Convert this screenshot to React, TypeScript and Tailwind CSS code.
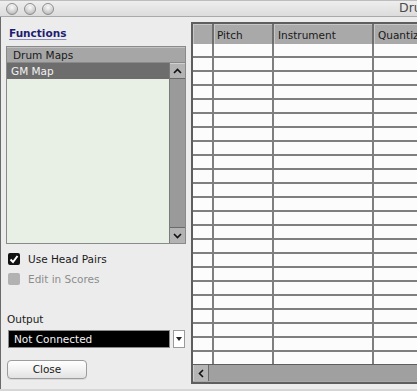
import React from "react";

const font = { fontFamily: '"DejaVu Sans", "Noto Sans", sans-serif' };

function Light() {
  return (
    <div className="w-[12px] h-[12px] rounded-full border border-[#8e8e8e] bg-[radial-gradient(circle_at_50%_35%,#fafafa,#d0d0d0_55%,#a9a9a9)] shadow-[inset_0_1px_1px_rgba(255,255,255,0.8)]" />
  );
}

const ROWS = Array.from({ length: 23 }, (_, i) => i);

export default function App() {
  return (
    <div
      className="w-[417px] h-[391px] overflow-hidden bg-[#d6d6d6] flex flex-col text-[#1a1a1a]"
      style={font}
    >
      {/* title bar */}
      <div className="h-[17px] shrink-0 flex items-center overflow-hidden bg-[linear-gradient(#eeeeee,#dcdcdc)] border-b border-[#a9a9a9] border-t border-t-[#bdbdbd] pl-[6px]">
        <div className="flex gap-[6px] shrink-0">
          <Light />
          <Light />
          <Light />
        </div>
        <span className="ml-[345px] shrink-0 whitespace-nowrap text-[12.5px] leading-none text-[#4a4a4a]">
          Drum Map
        </span>
      </div>

      {/* body */}
      <div className="flex-1 flex bg-[#ececec] border-l border-[#6a6a6a] mb-[2px]">
        {/* left column */}
        <div className="w-[186px] shrink-0 pl-[5px] flex flex-col">
          <div className="mt-[9px] h-[14px] ml-[3px] text-[10.5px] font-bold leading-[14px] text-[#1c1c72] underline decoration-[#8c8cb8] underline-offset-[2px]">
            Functions
          </div>
          {/* list */}
          <div className="mt-[6px] w-[180px] h-[198px] border border-[#8a8a8a] flex flex-col">
            <div className="h-[16px] shrink-0 bg-[#a6a6a6] border-b border-[#8a8a8a] border-t border-t-[#c2c2c2] pl-[6px] text-[10.5px] leading-[14px] text-[#1a1a1a]">
              Drum Maps
            </div>
            <div className="flex-1 flex">
              <div className="flex-1 flex flex-col bg-[#e8efe4]">
                <div className="h-[16px] bg-[#6d6d6d] pl-[4px] text-[10.5px] leading-[16px] text-[#f2f2f2]">
                  GM Map
                </div>
              </div>
              <div className="w-[16px] flex flex-col bg-[#9a9a9a] border-l border-[#7a7a7a]">
                <div className="h-[16px] bg-[#b3b3b3] border-b border-[#6a6a6a] border-t border-t-[#d0d0d0] flex items-center justify-center">
                  <svg width="9" height="6" viewBox="0 0 9 6">
                    <path d="M1 5 L4.5 1.5 L8 5" fill="none" stroke="#111" strokeWidth="1.6" />
                  </svg>
                </div>
                <div className="flex-1" />
                <div className="h-[16px] bg-[#b3b3b3] border-t border-[#6a6a6a] flex items-center justify-center">
                  <svg width="9" height="6" viewBox="0 0 9 6">
                    <path d="M1 1 L4.5 4.5 L8 1" fill="none" stroke="#111" strokeWidth="1.6" />
                  </svg>
                </div>
              </div>
            </div>
          </div>

          {/* checkboxes */}
          <div className="mt-[8px] ml-[2px] flex items-center h-[14px] gap-[8px]">
            <div className="w-[12px] h-[12px] rounded-[2px] bg-[#111] flex items-center justify-center">
              <svg width="10" height="9" viewBox="0 0 10 9">
                <path d="M1.5 4.5 L4 7 L8.5 1" fill="none" stroke="#fff" strokeWidth="2" />
              </svg>
            </div>
            <span className="text-[10.5px] leading-[14px] text-[#1a1a1a]">Use Head Pairs</span>
          </div>
          <div className="mt-[6px] ml-[2px] flex items-center h-[14px] gap-[8px]">
            <div className="w-[12px] h-[12px] rounded-[2px] bg-[#b2b2b2]" />
            <span className="text-[10.5px] leading-[14px] text-[#8c8c8c]">Edit in Scores</span>
          </div>

          <div className="mt-[26px] ml-[1px] text-[10.5px] leading-[14px] text-[#1a1a1a]">Output</div>
          <div className="mt-[4px] ml-[2px] flex items-center gap-[3px]">
            <div className="w-[162px] h-[18px] bg-black border border-[#8a8a8a] pl-[5px] text-[10.5px] leading-[16px] text-[#f4f4f4]">
              Not Connected
            </div>
            <div className="w-[12px] h-[18px] bg-white border border-[#9a9a9a] flex items-center justify-center">
              <svg width="6" height="4" viewBox="0 0 6 4">
                <path d="M0 0 L6 0 L3 4 Z" fill="#222" />
              </svg>
            </div>
          </div>

          <button className="mt-[12px] ml-[1px] w-[80px] h-[19px] rounded-[4px] border border-[#9c9c9c] bg-[linear-gradient(#ffffff,#f2f2f2_50%,#e2e2e2)] text-[10.5px] leading-[17px] text-[#1a1a1a] shadow-[0_1px_0_rgba(0,0,0,0.08)]">
            Close
          </button>
        </div>

        {/* table */}
        <div className="ml-[4px] mt-[5px] mb-[5px] flex-1 min-w-0 border-l-2 border-t-2 border-b-2 border-[#5e5e5e] flex flex-col overflow-hidden bg-[#a9a9a9]">
          {/* header */}
          <div className="h-[20px] shrink-0 flex text-[10.5px] leading-[20px] text-[#1a1a1a]">
            <div className="w-[19px] shrink-0 border-t border-l border-[#c6c6c6] bg-[#a9a9a9]" />
            <div className="w-[2px] shrink-0 bg-[#6e6e6e]" />
            <div className="w-[58px] shrink-0 border-t border-l border-[#c6c6c6] pl-[2px]">Pitch</div>
            <div className="w-[2px] shrink-0 bg-[#6e6e6e]" />
            <div className="w-[98px] shrink-0 border-t border-l border-[#c6c6c6] pl-[3px]">Instrument</div>
            <div className="w-[2px] shrink-0 bg-[#6e6e6e]" />
            <div className="w-[80px] shrink-0 border-t border-l border-[#c6c6c6] pl-[3px] whitespace-nowrap">Quantize</div>
          </div>
          {/* rows */}
          <div className="flex flex-col bg-[#808080]">
            {ROWS.map((r) => (
              <div
                key={r}
                className={`flex shrink-0 ${r < 22 ? "h-[14px] border-b-2 border-[#7f7f7f]" : "h-[12px]"}`}
              >
                <div className="w-[19px] shrink-0 bg-[#fcfcfc]" />
                <div className="w-[2px] shrink-0 bg-[#7f7f7f]" />
                <div className="w-[58px] shrink-0 bg-[#fcfcfc]" />
                <div className="w-[2px] shrink-0 bg-[#7f7f7f]" />
                <div className="w-[98px] shrink-0 bg-[#fcfcfc]" />
                <div className="w-[2px] shrink-0 bg-[#7f7f7f]" />
                <div className="flex-1 bg-[#fcfcfc]" />
              </div>
            ))}
          </div>
          {/* horizontal scrollbar */}
          <div className="h-[17px] shrink-0 flex bg-[#a0a0a0] border-t border-[#5e5e5e]">
            <div className="w-[16px] bg-[#b5b5b5] border-r border-[#6a6a6a] border-l border-l-[#d0d0d0] flex items-center justify-center">
              <svg width="6" height="9" viewBox="0 0 6 9">
                <path d="M5 1 L1.5 4.5 L5 8" fill="none" stroke="#111" strokeWidth="1.6" />
              </svg>
            </div>
            <div className="flex-1" />
          </div>
        </div>
      </div>
    </div>
  );
}
